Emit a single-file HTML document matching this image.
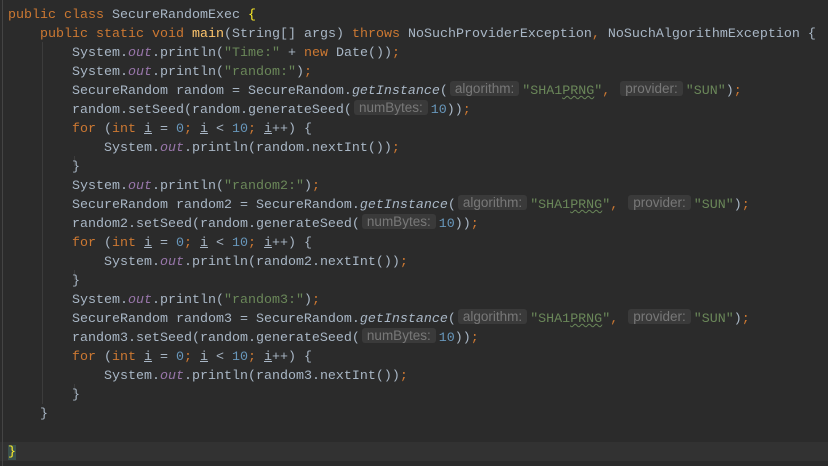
<!DOCTYPE html>
<html><head><meta charset="utf-8"><style>
html,body{margin:0;padding:0;background:#2b2b2b;width:828px;height:466px;overflow:hidden}
#c{position:absolute;left:8px;top:6px;font-family:"Liberation Mono",monospace;font-size:13.33px;line-height:19px;color:#a9b7c6;white-space:pre}
.l{height:19px;overflow:visible}
.k{color:#cc7832}.s{color:#6a8759}.n{color:#6897bb}.f{color:#9876aa;font-style:italic}.m{color:#ffc66d}.i{font-style:italic}
.u{text-decoration:underline}
.w{text-decoration:underline wavy #6a8759;text-decoration-thickness:1px}
.h{display:inline-block;font-family:"Liberation Sans",sans-serif;font-size:13.5px;color:#787878;background:#3a3a3a;border-radius:3px;padding:0 5px;line-height:15px;margin:0 3px 0 2px;position:relative;top:-1px}
.cur{position:absolute;left:0;top:442px;width:828px;height:19px;background:#323232}
.g{position:absolute;width:1px;background:#3c3c3c}
.gut{position:absolute;left:2px;top:0;width:1px;height:466px;background:#444}
.br{background:#3b514d;color:#ffef28}
</style></head><body>
<div class="cur"></div>
<div class="gut"></div>
<div class="g" style="left:42px;top:42px;height:362px"></div>
<div class="g" style="left:74px;top:156px;height:10px"></div>
<div class="g" style="left:74px;top:270px;height:10px"></div>
<div class="g" style="left:74px;top:384px;height:10px"></div>
<div id="c"><div class="l"><span class="k">public class </span>SecureRandomExec <span style="color:#ffef28">{</span></div><div class="l">    <span class="k">public static void </span><span class="m">main</span>(String[] args) <span class="k">throws </span>NoSuchProviderException<span class="k">, </span>NoSuchAlgorithmException {</div><div class="l">        System.<span class="f">out</span>.println(<span class="s">"Time:"</span> + <span class="k">new </span>Date())<span class="k">;</span></div><div class="l">        System.<span class="f">out</span>.println(<span class="s">"random:"</span>)<span class="k">;</span></div><div class="l">        SecureRandom random = SecureRandom.<span class="i">getInstance</span>(<span class="h">algorithm:</span><span class="s">"SHA1<span class="w">PRNG</span>"</span><span class="k">, </span><span class="h">provider:</span><span class="s">"SUN"</span>)<span class="k">;</span></div><div class="l">        random.setSeed(random.generateSeed(<span class="h">numBytes:</span><span class="n">10</span>))<span class="k">;</span></div><div class="l">        <span class="k">for </span>(<span class="k">int </span><span class="u">i</span> = <span class="n">0</span><span class="k">; </span><span class="u">i</span> &lt; <span class="n">10</span><span class="k">; </span><span class="u">i</span>++) {</div><div class="l">            System.<span class="f">out</span>.println(random.nextInt())<span class="k">;</span></div><div class="l">        }</div><div class="l">        System.<span class="f">out</span>.println(<span class="s">"random2:"</span>)<span class="k">;</span></div><div class="l">        SecureRandom random2 = SecureRandom.<span class="i">getInstance</span>(<span class="h">algorithm:</span><span class="s">"SHA1<span class="w">PRNG</span>"</span><span class="k">, </span><span class="h">provider:</span><span class="s">"SUN"</span>)<span class="k">;</span></div><div class="l">        random2.setSeed(random.generateSeed(<span class="h">numBytes:</span><span class="n">10</span>))<span class="k">;</span></div><div class="l">        <span class="k">for </span>(<span class="k">int </span><span class="u">i</span> = <span class="n">0</span><span class="k">; </span><span class="u">i</span> &lt; <span class="n">10</span><span class="k">; </span><span class="u">i</span>++) {</div><div class="l">            System.<span class="f">out</span>.println(random2.nextInt())<span class="k">;</span></div><div class="l">        }</div><div class="l">        System.<span class="f">out</span>.println(<span class="s">"random3:"</span>)<span class="k">;</span></div><div class="l">        SecureRandom random3 = SecureRandom.<span class="i">getInstance</span>(<span class="h">algorithm:</span><span class="s">"SHA1<span class="w">PRNG</span>"</span><span class="k">, </span><span class="h">provider:</span><span class="s">"SUN"</span>)<span class="k">;</span></div><div class="l">        random3.setSeed(random.generateSeed(<span class="h">numBytes:</span><span class="n">10</span>))<span class="k">;</span></div><div class="l">        <span class="k">for </span>(<span class="k">int </span><span class="u">i</span> = <span class="n">0</span><span class="k">; </span><span class="u">i</span> &lt; <span class="n">10</span><span class="k">; </span><span class="u">i</span>++) {</div><div class="l">            System.<span class="f">out</span>.println(random3.nextInt())<span class="k">;</span></div><div class="l">        }</div><div class="l">    }</div><div class="l"> </div><div class="l"><span class="br">}</span></div></div>
</body></html>
